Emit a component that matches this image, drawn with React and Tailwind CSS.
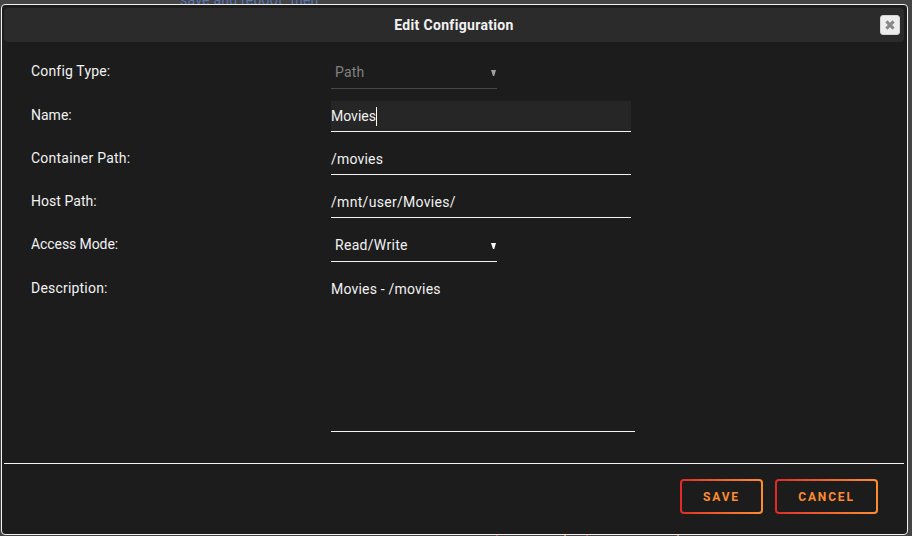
const text = "text-[14px] leading-5 text-[#f2f2f2]";

function Row({ label, className, tracking, children }) {
  return (
    <div className={`flex ${className}`}>
      <div className={`w-[300px] shrink-0 whitespace-nowrap ${text} ${tracking}`}>{label}</div>
      {children}
    </div>
  );
}

function Select({ value, disabled, tracking }) {
  return (
    <div
      className={`flex h-[31px] w-[166px] justify-between border-b pt-[4px] pl-[4px] text-[14px] leading-5 ${
        disabled ? "border-[#484848] text-[#808080]" : "border-[#f2f2f2] text-[#f2f2f2]"
      }`}
    >
      <span className={tracking}>{value}</span>
      <svg className="mt-[8px] mr-[1px] h-[6px] w-[5px]" viewBox="0 0 5 6" fill={disabled ? "#a0a0a0" : "#ffffff"}>
        <path d="M0 0H5L3.2 6H2Z" />
      </svg>
    </div>
  );
}

function Field({ value, focused, tracking }) {
  return (
    <div
      className={`flex h-[31px] w-[300px] border-b border-[#f2f2f2] pt-[5px] ${text} ${
        focused ? "bg-[#262626]" : ""
      }`}
    >
      <span className={tracking}>{value}</span>
      {focused && <span className="mt-px h-[19px] w-px bg-white" />}
    </div>
  );
}

function Button({ className, tracking, children }) {
  return (
    <button className={`h-[35px] rounded-[4px] bg-linear-to-r from-[#e22828] to-[#ff8c2f] p-[2px] ${className}`}>
      <span
        className={`flex h-full w-full items-center justify-center rounded-[2px] bg-[#1c1c1c] text-[12px] font-bold text-[#ff8c2f] ${tracking}`}
      >
        {children}
      </span>
    </button>
  );
}

export default function App() {
  return (
    <div className="relative h-[536px] w-[912px] overflow-hidden bg-[#444444] font-['Roboto','Liberation_Sans',sans-serif]">
      <div className="absolute top-[-10px] left-[180px] text-[14px] leading-5 tracking-[0.22px] whitespace-pre text-[#5b75b0]">
        save and reboot  then
      </div>
      <div className="absolute top-[535px] left-[496px] flex h-px w-[183px] justify-between">
        <i className="w-[2px] bg-[#b65050]" />
        <i className="ml-[66px] w-[2px] bg-[#c89464]" />
        <i className="ml-[20px] w-[2px] bg-[#b65050]" />
        <i className="ml-[89px] w-[2px] bg-[#c89464]" />
      </div>

      <section className="absolute top-[4px] left-[1px] flex h-[531px] w-[907px] flex-col rounded-[4px] border border-[#f2f2f2] bg-[#1c1c1c] pt-[3px] pr-[3px] pl-[2px]">
        <header className="flex h-[34px] shrink-0 items-center rounded-[4px] bg-[#2b2b2b] pr-[4px] pl-[24px]">
          <h1 className="flex-1 text-center text-[14px] leading-5 font-bold tracking-[0.33px] text-[#f2f2f2]">
            Edit Configuration
          </h1>
          <button className="flex h-[20px] w-[20px] items-center justify-center rounded-[3px] border border-[#d3d3d3] bg-[#ededed]">
            <svg className="h-[10px] w-[10px]" viewBox="0 0 10 10" stroke="#888888" strokeWidth="3">
              <path d="M1.4 1.4L8.6 8.6M8.6 1.4L1.4 8.6" />
            </svg>
          </button>
        </header>

        <main className="flex h-[422px] shrink-0 flex-col border-b border-[#f2f2f2] pt-[16px] pl-[27px]">
          <Row label="Config Type:" className="h-[43px]" tracking="pt-[3px] tracking-[0.17px]">
            <Select value="Path" disabled tracking="tracking-[0.2px]" />
          </Row>
          <Row label="Name:" className="h-[43px]" tracking="pt-[4px] tracking-[0px]">
            <Field value="Movies" focused tracking="tracking-[0px]" />
          </Row>
          <Row label="Container Path:" className="h-[43px]" tracking="pt-[4px] tracking-[0.24px]">
            <Field value="/movies" tracking="tracking-[0.2px]" />
          </Row>
          <Row label="Host Path:" className="h-[44px]" tracking="pt-[4px] tracking-[0.05px]">
            <Field value="/mnt/user/Movies/" tracking="tracking-[0.3px]" />
          </Row>
          <Row label="Access Mode:" className="h-[43px]" tracking="pt-[3px] tracking-[-0.08px]">
            <Select value="Read/Write" tracking="tracking-[0.3px]" />
          </Row>
          <Row label="Description:" className="h-[158px]" tracking="pt-[4px] tracking-[0.2px]">
            <div className={`h-[158px] w-[304px] border-b border-[#f2f2f2] pt-[5px] tracking-[0.2px] ${text}`}>
              Movies - /movies
            </div>
          </Row>
        </main>

        <footer className="flex justify-end gap-[12px] pt-[15px] pr-[26px]">
          <Button className="w-[83px]" tracking="tracking-[1.8px]">SAVE</Button>
          <Button className="w-[103px]" tracking="tracking-[1.85px]">CANCEL</Button>
        </footer>
      </section>
    </div>
  );
}
